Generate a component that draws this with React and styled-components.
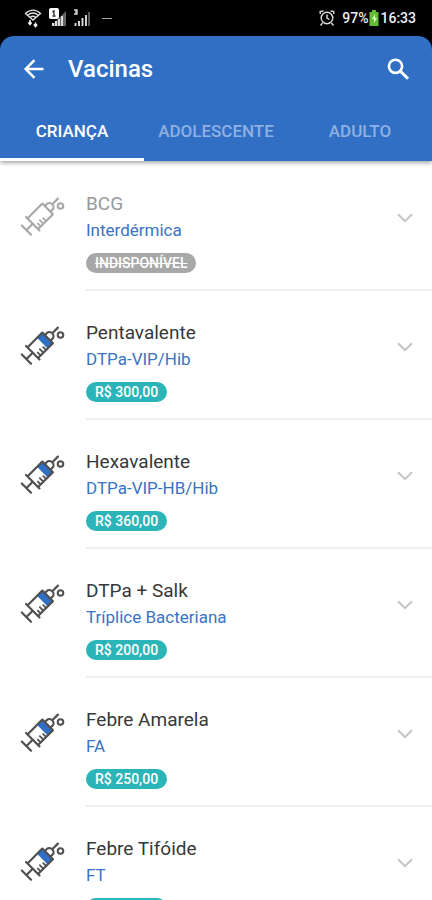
import React from "react";
import styled, { createGlobalStyle } from "styled-components";

const COLORS = {
  primary: "#306fc3",
  link: "#3a73c4",
  teal: "#2bb5b8",
  gray900: "#383838",
  gray600: "#505050",
  gray400: "#a8a8a8",
  gray300: "#c4c4c4",
  gray100: "#eee",
  tabMuted: "#8fb0e4",
};

const TABS = ["CRIANÇA", "ADOLESCENTE", "ADULTO"];

const VACCINES = [
  { name: "BCG", detail: "Interdérmica" },
  { name: "Pentavalente", detail: "DTPa-VIP/Hib", price: "R$ 300,00" },
  { name: "Hexavalente", detail: "DTPa-VIP-HB/Hib", price: "R$ 360,00" },
  { name: "DTPa + Salk", detail: "Tríplice Bacteriana", price: "R$ 200,00" },
  { name: "Febre Amarela", detail: "FA", price: "R$ 250,00" },
  { name: "Febre Tifóide", detail: "FT", price: "R$ 250,00" },
];

const App = () => {
  const [activeTab, setActiveTab] = React.useState(TABS[0]);

  return (
    <Screen>
      <GlobalStyle />
      <StatusBar>
        <StatusGroup>
          <WifiIcon />
          <SimIcon />
          <SignalIcon />
          <Dash />
        </StatusGroup>
        <StatusGroup>
          <AlarmIcon />
          <BatteryStatus>
            97%
            <BatteryIcon />
            16:33
          </BatteryStatus>
        </StatusGroup>
      </StatusBar>

      <Header>
        <Toolbar>
          <IconButton aria-label="Voltar">
            <svg width="24" height="24" viewBox="0 0 24 24" fill="none" stroke="#fff" strokeWidth="2.5">
              <path d="M21.5 12H4M12.5 3.2L3.7 12l8.8 8.8" />
            </svg>
          </IconButton>
          <Title>Vacinas</Title>
          <IconButton aria-label="Buscar">
            <svg width="24" height="24" viewBox="0 0 24 24" fill="none" stroke="#fff">
              <circle cx="9.5" cy="9.3" r="6.6" strokeWidth="2.6" />
              <path d="M14.2 14L22 21.8" strokeWidth="3" />
            </svg>
          </IconButton>
        </Toolbar>
        <TabList role="tablist">
          {TABS.map((tab) => (
            <Tab
              key={tab}
              role="tab"
              aria-selected={tab === activeTab}
              $active={tab === activeTab}
              onClick={() => setActiveTab(tab)}
            >
              {tab}
            </Tab>
          ))}
        </TabList>
      </Header>

      <List>
        {VACCINES.map((vaccine) => (
          <VaccineRow key={vaccine.name} {...vaccine} />
        ))}
      </List>
    </Screen>
  );
};

const VaccineRow = ({ name, detail, price }) => {
  const available = Boolean(price);

  return (
    <Row>
      <SyringeIcon available={available} />
      <RowBody>
        <RowText>
          <Name $available={available}>{name}</Name>
          <Detail>{detail}</Detail>
          <Badge $available={available}>{price || "INDISPONÍVEL"}</Badge>
        </RowText>
        <ExpandButton aria-label={`Detalhes de ${name}`}>
          <svg width="16" height="10" viewBox="0 0 16 10" fill="none" stroke={COLORS.gray300} strokeWidth="2">
            <path d="M1 1.2l7 7 7-7" />
          </svg>
        </ExpandButton>
      </RowBody>
    </Row>
  );
};

const SyringeIcon = ({ available }) => (
  <Syringe
    viewBox="0 0 46 42"
    fill="none"
    stroke={available ? COLORS.gray600 : COLORS.gray400}
    strokeWidth="2.2"
    strokeLinecap="round"
    strokeLinejoin="round"
    aria-hidden="true"
  >
    {/* drawn upright, then tilted so the needle points up and right */}
    <g transform="translate(19.5 21) rotate(45)">
      {available && <path d="M-7.5-11.5h15v7.500h-15z" fill={COLORS.primary} stroke="none" />}
      {/* barrel and finger flange */}
      <path d="M-7.5 9.500v-21h15v21M-9.500 9.500h19" />
      {/* hub and needle */}
      <path d="M-4-12v-2.500a4 3.500 0 0 1 8 0v2.500M0-18.500V-26" />
      {/* scale */}
      <path d="M7 5.800H3.500M7 2H2.500M7-1.800H3.500" strokeWidth="1.8" />
      {/* plunger */}
      <path d="M0 10v8M-6.500 18.500h13" />
    </g>
    <circle cx="40.5" cy="10" r="2.8" strokeWidth="2" />
  </Syringe>
);

const WifiIcon = () => (
  <svg width="18" height="20" viewBox="0 0 18 20" fill="none" stroke="#ddd">
    <path d="M1.5 5.5c4.5-4.500 10.500-4.500 15 0L9 12zM4 7c3-2.500 7-2.500 10 0M6.200 9.200c1.800-1.300 3.800-1.300 5.600 0" strokeWidth="1.4" />
    <path d="M6 12v4.500M4.500 14.500L6 16.500l1.500-2M11.500 18.500v-4M9.800 16.500l1.700 2 1.700-2" fill="#fff" stroke="#fff" strokeWidth="1.5" />
  </svg>
);

const SimIcon = () => (
  <svg width="18" height="20" viewBox="0 0 18 20">
    <path d="M2 18L17 3v15z" fill="#666" />
    <path d="M3 15h2v3H3zM6 13h2v5H6zM9 11h2v7H9zM12 8h2v10h-2z" fill="#ddd" />
    <rect width="10" height="11" rx="2" fill="#fff" />
    <path d="M3.500 4L5 3v4M3.500 8h3" stroke="#222" strokeWidth="1.3" fill="none" />
  </svg>
);

const SignalIcon = () => (
  <svg width="17" height="20" viewBox="0 0 17 20" fill="none" stroke="#ddd">
    <path d="M0 2h3v4H0M1 4h2" strokeWidth="1.3" />
    <path d="M1.500 18v-3M5 18v-5M8.500 18V10M12 18V7" strokeWidth="1.9" />
    <path d="M15 18V4" stroke="#777" strokeWidth="1.5" />
  </svg>
);

const AlarmIcon = () => (
  <svg width="16" height="18" viewBox="0 0 16 18" fill="none" stroke="#ddd" strokeWidth="1.4">
    <circle cx="8" cy="9" r="5.8" />
    <path d="M8 5.500V9l2.500 1.500M1.200 5V2.500L4.500 2M14.800 5V2.500L11.500 2M3.500 14L1.500 16.500M12.500 14l2 2.500" />
  </svg>
);

const BatteryIcon = () => (
  <svg width="10" height="16" viewBox="0 0 10 16">
    <path d="M3 0h4v2h2.500v14h-9V2H3z" fill="#62bd35" />
    <path d="M6 4L3 9h2v4l3-5H6z" fill="#d8ffc0" />
  </svg>
);

const GlobalStyle = createGlobalStyle`
  *, *::before, *::after {
    box-sizing: border-box;
  }

  body {
    margin: 0;
    background: #fff;
    font-family: Roboto, "Liberation Sans", sans-serif;
  }

  html, body, #root {
    height: 100%;
  }
`;

const Screen = styled.div`
  display: flex;
  flex-direction: column;
  height: 100%;
  background: linear-gradient(#000 60px, #fff 60px);
`;

const StatusBar = styled.div`
  display: flex;
  flex: none;
  justify-content: space-between;
  height: 36px;
  padding: 0 16px 0 24px;
  color: #eee;
`;

const StatusGroup = styled.div`
  display: flex;
  align-items: center;
  gap: 7px;
`;

const BatteryStatus = styled.span`
  display: flex;
  align-items: center;
  gap: 1px;
  font-size: 14px;
  font-weight: 500;
`;

const Dash = styled.span`
  width: 10px;
  height: 1px;
  margin-left: 4px;
  background: #aaa;
`;

const Header = styled.header`
  position: relative;
  flex: none;
  border-radius: 14px 14px 0 0;
  background: ${COLORS.primary};
  box-shadow: 0 2px 4px rgba(0, 0, 0, 0.35);
`;

const Toolbar = styled.div`
  display: flex;
  align-items: center;
  gap: 20px;
  height: 66px;
  padding: 0 20px;
`;

const Button = styled.button`
  border: none;
  padding: 0;
  background: none;
  font-family: inherit;
  cursor: pointer;
`;

const IconButton = styled(Button)`
  display: grid;
  place-items: center;
  width: 28px;
  height: 40px;
`;

const Title = styled.h1`
  flex: 1;
  margin: 0;
  color: #fff;
  font-size: 24px;
  font-weight: 500;
  line-height: 32px;
`;

const TabList = styled.div`
  display: grid;
  grid-template-columns: repeat(3, 1fr);
`;

const Tab = styled(Button)`
  height: 59px;
  padding-top: 2px;
  border-bottom: 3px solid ${(p) => (p.$active ? "#fff" : "transparent")};
  color: ${(p) => (p.$active ? "#fff" : COLORS.tabMuted)};
  font-size: 17px;
  font-weight: 500;
`;

const List = styled.ul`
  flex: 1;
  min-height: 0;
  margin: 0;
  padding: 1px 0 0;
  overflow-y: auto;
  scrollbar-width: none;
  list-style: none;
`;

const Row = styled.li`
  display: flex;
  align-items: flex-start;
  gap: 20px;
  padding-left: 20px;
`;

const Syringe = styled.svg`
  flex: none;
  width: 46px;
  height: 42px;
  margin-top: 34px;
`;

const RowBody = styled.div`
  display: flex;
  flex: 1;
  align-items: flex-start;
  justify-content: space-between;
  padding: 28px 18px 16px 0;
  border-bottom: 2px solid ${COLORS.gray100};
`;

const RowText = styled.div`
  display: flex;
  flex-direction: column;
  align-items: flex-start;
`;

const Name = styled.h2`
  margin: 0;
  color: ${(p) => (p.$available ? COLORS.gray900 : "#999")};
  font-size: 19px;
  font-weight: 400;
  line-height: 28px;
`;

const Detail = styled.p`
  margin: 0;
  color: ${COLORS.link};
  font-size: 17px;
  line-height: 24px;
`;

const Badge = styled.span`
  margin-top: 11px;
  padding: 0 9px;
  border-radius: 10px;
  background: ${(p) => (p.$available ? COLORS.teal : COLORS.gray400)};
  color: #fff;
  font-size: 14px;
  font-weight: 500;
  line-height: 20px;
  text-decoration: ${(p) => (p.$available ? "none" : "line-through")};
`;

const ExpandButton = styled(Button)`
  display: grid;
  place-items: center;
  width: 18px;
  height: 56px;
`;

export default App;
